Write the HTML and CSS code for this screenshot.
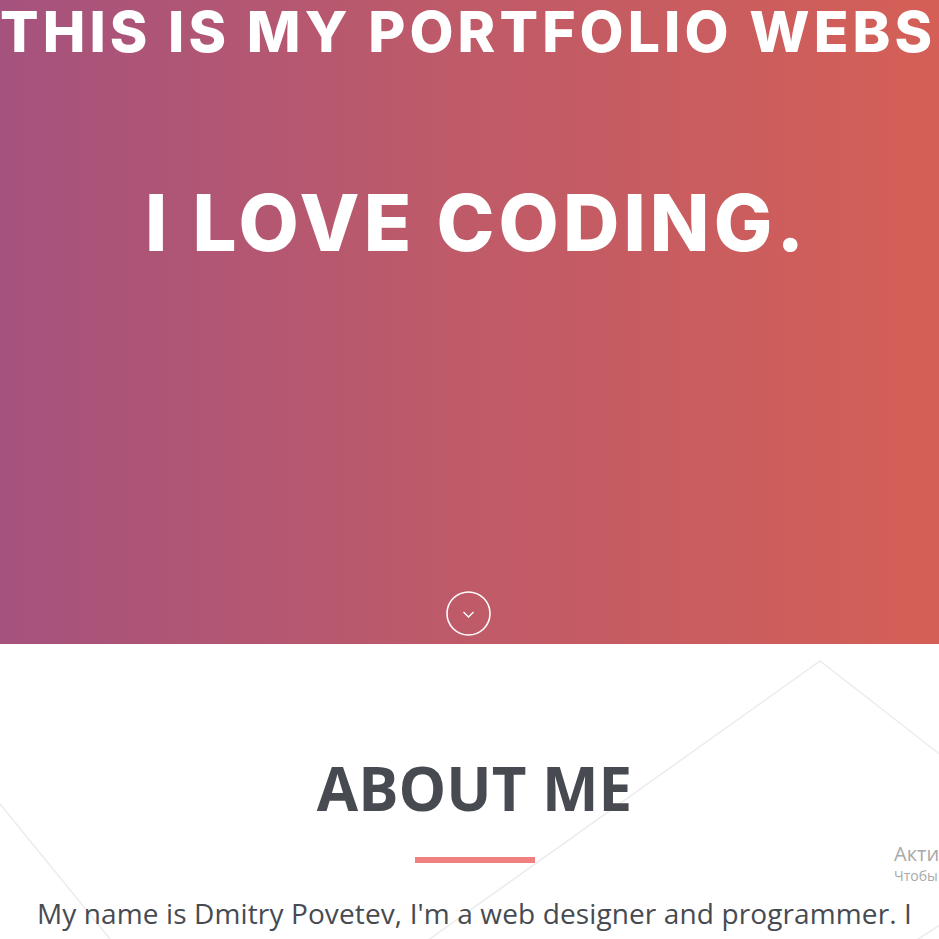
FILE: index.html
```html
<!DOCTYPE html>
<html lang="en">
<head>
<meta charset="utf-8">
<title>Portfolio</title>
<link rel="stylesheet" href="styles.css">
</head>
<body>
<header class="hero">
  <h1 class="hero-title">THIS IS MY PORTFOLIO WEBSITE</h1>
  <h2 class="hero-sub">I LOVE CODING.</h2>
  <a class="scroll-down" href="#about" aria-label="Scroll down">
    <svg width="45" height="45" viewBox="0 0 45 45">
      <circle cx="22.5" cy="22.5" r="21.5" fill="none" stroke="#fff" stroke-width="1.6"/>
      <path d="M17.5 21 L22.5 26 L27.5 21" fill="none" stroke="#fff" stroke-width="1.3"/>
    </svg>
  </a>
</header>
<section class="about" id="about">
  <svg class="about-bg" viewBox="0 0 939 400" preserveAspectRatio="none" aria-hidden="true">
    <polyline points="0,601 820,17 1100,235" fill="none" stroke="#ececec" stroke-width="1.5"/>
    <polyline points="0,160 300,528" fill="none" stroke="#ececec" stroke-width="1.5"/>
    <polyline points="880,320 960,268" fill="none" stroke="#ececec" stroke-width="1.5"/>
  </svg>
  <h2 class="about-title">ABOUT ME</h2>
  <div class="about-rule"></div>
  <p class="about-text">My name is Dmitry Povetev, I'm a web designer and programmer. I love creating beautiful, clean and functional websites.</p>
</section>
<div class="watermark">
  <div class="wm-title">Активация Windows</div>
  <div class="wm-sub">Чтобы активировать Windows, перейдите в раздел "Параметры".</div>
</div>
</body>
</html>
```
FILE: styles.css
```css
html, body {
  margin: 0;
  padding: 0;
}
body {
  width: 939px;
  height: 939px;
  overflow: hidden;
  position: relative;
  background: #fff;
  font-family: "Open Sans", "Noto Sans", sans-serif;
}
.hero {
  height: 644px;
  background: linear-gradient(to right, #a5527e 0%, #bd5a6a 45%, #d45f56 100%);
  display: flex;
  flex-direction: column;
  align-items: center;
  color: #fff;
  font-family: Inter, "Open Sans", sans-serif;
  box-sizing: border-box;
}
.hero-title {
  align-self: stretch;
  margin: 0;
  padding: 0;
  font-size: 57px;
  font-weight: 800;
  letter-spacing: 4.1px;
  line-height: 64px;
  white-space: nowrap;
  overflow: hidden;
}
.hero-sub {
  margin: 114px 0 0 14px;
  font-size: 78px;
  font-weight: 800;
  letter-spacing: 4.1px;
  line-height: 90px;
  white-space: nowrap;
}
.scroll-down {
  margin-top: auto;
  margin-bottom: 8px;
  display: block;
  width: 45px;
  height: 45px;
  margin-left: -3px;
}
.scroll-down svg {
  display: block;
}
.about {
  position: relative;
  display: flex;
  flex-direction: column;
  align-items: center;
  padding-top: 108px;
}
.about-bg {
  position: absolute;
  left: 0;
  top: 0;
  width: 939px;
  height: 400px;
  z-index: 0;
}
.about-title {
  position: relative;
  flex-shrink: 0;
  margin: 0 0 0 10px;
  font-size: 60px;
  font-weight: 700;
  line-height: 72px;
  color: #474b51;
}
.about-rule {
  position: relative;
  flex-shrink: 0;
  width: 120px;
  height: 6px;
  background: #f08080;
  margin: 33px 0 0 10px;
}
.about-text {
  position: relative;
  flex-shrink: 0;
  margin: 30px 0 0 10px;
  width: 900px;
  text-align: center;
  font-size: 28px;
  letter-spacing: 0.12px;
  line-height: 40px;
  color: #474b51;
}
.watermark {
  position: absolute;
  left: 894px;
  top: 841px;
  white-space: nowrap;
  color: #a9a9a9;
  font-family: "Open Sans", "Noto Sans", sans-serif;
}
.wm-title {
  font-size: 20px;
  line-height: 26px;
}
.wm-sub {
  font-size: 14px;
  line-height: 18px;
}
```
